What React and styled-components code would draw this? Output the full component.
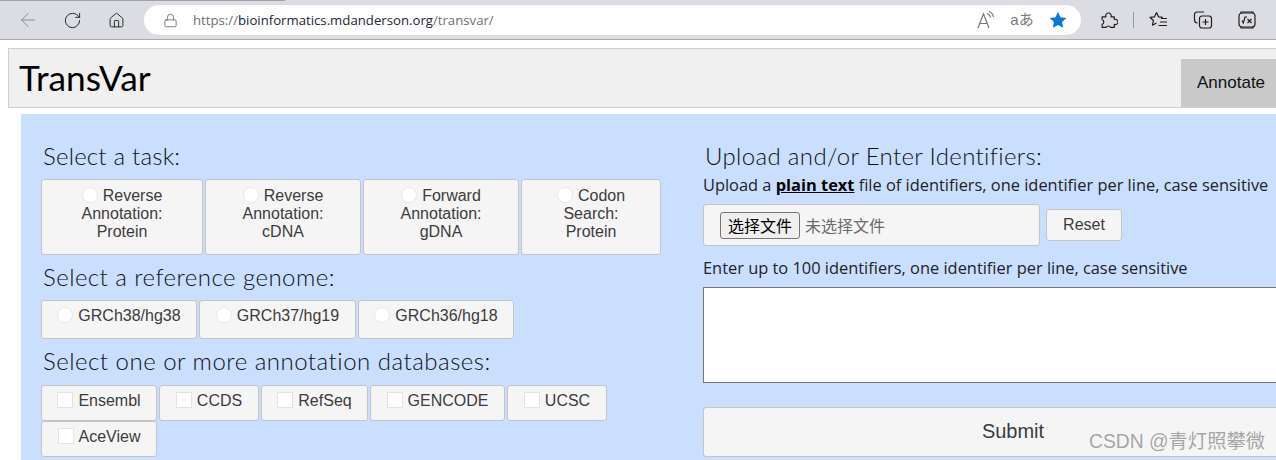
import React from 'react';
import styled, { createGlobalStyle } from 'styled-components';
import { ArrowLeft, RotateCw, Home, Lock } from 'lucide-react';

const GlobalStyle = createGlobalStyle`
  html, body {
    margin: 0;
    padding: 0;
    width: 1276px;
    height: 460px;
    overflow: hidden;
    background: #fff;
    font-family: "Liberation Sans", Arial, sans-serif;
  }
`;

const Toolbar = styled.div`
  position: relative;
  height: 40px;
  box-sizing: border-box;
  background: #dcdde2;
  border-bottom: 1px solid #a9aaad;
  display: flex;
  align-items: center;
  padding-top: 1px;
`;

const TabEdge = styled.div`
  position: absolute;
  top: 0;
  left: 0;
  width: 285px;
  height: 1px;
  background: #a0a2a8;
`;

const NavIcon = styled.div`
  width: ${({ w }) => w || 44}px;
  display: flex;
  justify-content: center;
  align-items: center;
  color: ${({ muted }) => (muted ? '#85868a' : '#1f1f1f')};
`;

const AddressBar = styled.div`
  flex: none;
  width: 937px;
  height: 30px;
  margin-left: 12px;
  border-radius: 15px;
  background: #fff;
  display: flex;
  align-items: center;
  padding: 0 0 0 19px;
  box-sizing: border-box;
`;

const Url = styled.div`
  margin-left: 15px;
  font: 13.2px "Open Sans", "Noto Sans", sans-serif;
  color: #6f7073;
  flex: 1;
  span { color: #1b2733; }
`;

const AddressIcon = styled.div`
  width: ${({ w }) => w}px;
  padding-bottom: ${({ lift }) => lift || 0}px;
  display: flex;
  justify-content: center;
  align-items: center;
  color: #77787b;
  font: 15px "Liberation Sans", "Noto Sans CJK JP", sans-serif;
`;

const Actions = styled.div`
  display: flex;
  align-items: center;
  margin-left: 14px;
`;

const Divider = styled.div`
  width: 1px;
  height: 16px;
  background: #9a9a9e;
  margin: 0 14px 0 10px;
`;

const ActionIcon = styled.div`
  width: ${({ w }) => w || 44}px;
  margin-left: ${({ before }) => before || 0}px;
  display: flex;
  justify-content: center;
  color: #1f1f1f;
`;

const Page = styled.div`
  padding: 8px 0 0 8px;
`;

const Navbar = styled.div`
  height: 60px;
  box-sizing: border-box;
  background: #f0f0f0;
  border: 1px solid #cfcfcf;
  border-right: none;
  display: flex;
  justify-content: space-between;
  align-items: flex-end;
`;

const Brand = styled.div`
  align-self: center;
  margin-left: 10px;
  font: 35.3px/44px "Lato", "Open Sans", sans-serif;
  color: #000;
`;

const NavTab = styled.div`
  width: 95px;
  height: 48px;
  box-sizing: border-box;
  background: #c9c9c9;
  padding-left: 16px;
  font-size: 17px;
  line-height: 47px;
  color: #111;
`;

const Panel = styled.div`
  margin: 6px 0 0 13px;
  height: 346px;
  background: #cadfff;
  display: flex;
  padding: 25px 0 0 20px;
  box-sizing: border-box;
  overflow: hidden;
`;

const LeftColumn = styled.div`
  flex: none;
  width: 662px;
`;

const RightColumn = styled.div`
  flex: none;
  width: 620px;
`;

const Heading = styled.h2`
  margin: 0 0 ${({ gap }) => gap}px 2px;
  font: 300 24px/34px "Lato", "Noto Sans", sans-serif;
  letter-spacing: ${({ spacing }) => spacing || 0}px;
  color: #111;
`;

const ButtonRow = styled.div`
  display: flex;
  flex-wrap: wrap;
  column-gap: 2px;
  margin-bottom: ${({ after }) => after || 0}px;
`;

const ChoiceButton = styled.label`
  width: ${({ w }) => w}px;
  height: ${({ h }) => h}px;
  box-sizing: border-box;
  padding-top: ${({ top }) => top || 6}px;
  background: #f5f5f5;
  border: 1px solid #c4c4c4;
  border-radius: 3px;
  font-size: 16px;
  line-height: 18px;
  text-align: center;
  color: #3c3c3c;
`;

const Radio = styled.input.attrs({ type: 'radio' })`
  appearance: none;
  display: inline-block;
  box-sizing: border-box;
  width: 16px;
  height: 16px;
  margin: 0 5px 0 0;
  border: 1px solid #e6e9ee;
  border-radius: 50%;
  background: #fff;
  vertical-align: -2px;
`;

const Checkbox = styled.input.attrs({ type: 'checkbox' })`
  appearance: none;
  display: inline-block;
  box-sizing: border-box;
  width: 16px;
  height: 16px;
  margin: 0 5px 0 0;
  border: 1px solid #e2e4e8;
  background: #fff;
  vertical-align: -2px;
`;

const Note = styled.p`
  margin: 0;
  font: 16.4px/20px "Open Sans", "Noto Sans", sans-serif;
  color: #222;
  white-space: nowrap;
  b {
    color: #000;
    text-decoration: underline;
  }
`;

const FileRow = styled.div`
  display: flex;
  align-items: center;
  gap: 6px;
  margin: 9px 0 12px;
`;

const FileBox = styled.div`
  width: 337px;
  height: 42px;
  box-sizing: border-box;
  background: #f5f5f5;
  border: 1px solid #c4c4c4;
  border-radius: 3px;
  display: flex;
  align-items: center;
  padding-left: 16px;
  gap: 5px;
  font: 16px "Noto Sans CJK SC", sans-serif;
  color: #6b6b6b;
`;

const FileButton = styled.button`
  width: 80px;
  height: 27px;
  padding: 0;
  background: #efefef;
  border: 1px solid #767676;
  border-radius: 3px;
  font: 16px "Noto Sans CJK SC", sans-serif;
  color: #000;
`;

const ResetButton = styled.button`
  width: 76px;
  height: 32px;
  padding: 0;
  background: #f5f5f5;
  border: 1px solid #c4c4c4;
  border-radius: 3px;
  font: 16px "Liberation Sans", sans-serif;
  color: #3c3c3c;
`;

const IdentifierInput = styled.textarea`
  display: block;
  width: 620px;
  height: 96px;
  box-sizing: border-box;
  margin: 9px 0 24px;
  background: #fff;
  border: 1px solid #767676;
  resize: none;
`;

const SubmitButton = styled.button`
  display: block;
  width: 620px;
  height: 50px;
  padding: 0 0 2px;
  background: #f5f5f5;
  border: 1px solid #c4c4c4;
  border-radius: 3px;
  font: 20px "Liberation Sans", sans-serif;
  color: #3c3c3c;
`;

const Watermark = styled.div`
  position: absolute;
  left: 1089px;
  top: 430px;
  font: 19.3px/24px "Liberation Sans", "Noto Sans CJK SC", sans-serif;
  color: rgba(130, 130, 130, 0.7);
  white-space: nowrap;
`;

const ReadAloudIcon = () => (
  <svg width="20" height="20" viewBox="0 0 20 20" fill="none" stroke="currentColor" strokeWidth="1.2">
    <path d="M2 18 L7.5 4 L13 18 M4 13.5 H11" />
    <path d="M11 3.5 a5 5 0 0 1 3.5 4 M13 1.5 a7.5 7.5 0 0 1 4.5 5.5" />
  </svg>
);

const StarIcon = () => (
  <svg width="18" height="18" viewBox="0 0 18 18">
    <path
      d="M9 .8 l2.5 5.4 5.9.7 -4.4 4 1.2 5.9 L9 13.9 l-5.2 2.9 1.2-5.9 -4.4-4 5.9-.7 z"
      fill="#0a78d7"
    />
  </svg>
);

const PuzzleIcon = () => (
  <svg width="18" height="18" viewBox="0 0 17 17" fill="none" stroke="currentColor" strokeWidth="1.1" strokeLinejoin="round">
    <path d="M2 5.5 H5.6 a2.6 2.6 0 1 1 4.8 0 H13.5 V8 a2.5 2.5 0 1 1 0 4.6 V15.5 H10 a2.3 2.3 0 0 0 -4.2 0 H2 V12.6 a2.3 2.3 0 0 0 0 -4.4 Z" />
  </svg>
);

const FavoritesIcon = () => (
  <svg width="20" height="20" viewBox="0 0 20 20" fill="none" stroke="currentColor" strokeWidth="1.2">
    <path d="M7.5 2.5 l2 4.3 4.3.5 M7.5 2.5 l-2 4.3 -4.5.5 3.4 3.2 -.9 4.7 4-2.3" strokeLinejoin="round" />
    <path d="M12 8.5 H18 M11 12 H18 M9.5 15.5 H18" />
  </svg>
);

const CollectionsIcon = () => (
  <svg width="20" height="20" viewBox="0 0 20 20" fill="none" stroke="currentColor" strokeWidth="1.2">
    <path d="M11 2 H4 a2.5 2.5 0 0 0 -2.5 2.5 V10 a3 3 0 0 0 3 3" />
    <rect x="6.5" y="6" width="12" height="12" rx="2.5" />
    <path d="M12.5 9 V15 M9.5 12 H15.5" />
  </svg>
);

const MathIcon = () => (
  <svg width="20" height="20" viewBox="0 0 20 20" fill="none" stroke="currentColor" strokeWidth="1.2">
    <rect x="2" y="3" width="16" height="14" rx="3" />
    <path d="M4 3.5 V2 H16 V3.5 M4 16.5 V18 H16 V16.5" />
    <path d="M5 10.5 L6.3 13 L8 7 H10" />
    <path d="M10.5 9 L14.5 13 M14.5 9 L10.5 13" />
  </svg>
);

const tasks = [
  { w: 162, lines: ['Reverse', 'Annotation:', 'Protein'] },
  { w: 156, lines: ['Reverse', 'Annotation:', 'cDNA'] },
  { w: 156, lines: ['Forward', 'Annotation:', 'gDNA'] },
  { w: 140, lines: ['Codon', 'Search:', 'Protein'] },
];

const genomes = [
  { w: 156, name: 'GRCh38/hg38' },
  { w: 157, name: 'GRCh37/hg19' },
  { w: 156, name: 'GRCh36/hg18' },
];

const databases = [
  { w: 116, name: 'Ensembl' },
  { w: 100, name: 'CCDS' },
  { w: 107, name: 'RefSeq' },
  { w: 135, name: 'GENCODE' },
  { w: 100, name: 'UCSC' },
  { w: 116, name: 'AceView' },
];

const App = () => (
  <>
    <GlobalStyle />
    <Toolbar>
      <TabEdge />
      <NavIcon muted><ArrowLeft size={22} strokeWidth={1} style={{ marginLeft: 12 }} /></NavIcon>
      <NavIcon><RotateCw size={19} strokeWidth={1.2} style={{ marginLeft: 12 }} /></NavIcon>
      <NavIcon><Home size={17} strokeWidth={1.3} style={{ marginLeft: 12 }} /></NavIcon>
      <AddressBar>
        <Lock size={15} strokeWidth={1.2} color="#555" />
        <Url>https://<span>bioinformatics.mdanderson.org</span>/transvar/</Url>
        <AddressIcon w={36}><ReadAloudIcon /></AddressIcon>
        <AddressIcon w={36} lift={3}>aあ</AddressIcon>
        <AddressIcon w={36}><StarIcon /></AddressIcon>
        <AddressIcon w={5} />
      </AddressBar>
      <Actions>
        <ActionIcon w={28}><PuzzleIcon /></ActionIcon>
        <Divider />
        <ActionIcon w={22}><FavoritesIcon /></ActionIcon>
        <ActionIcon w={44} before={11}><CollectionsIcon /></ActionIcon>
        <ActionIcon w={43}><MathIcon /></ActionIcon>
      </Actions>
    </Toolbar>
    <Page>
      <Navbar>
        <Brand>TransVar</Brand>
        <NavTab>Annotate</NavTab>
      </Navbar>
      <Panel>
        <LeftColumn>
          <Heading gap={6} spacing={0.2}>Select a task:</Heading>
          <ButtonRow after={5}>
            {tasks.map(({ w, lines }) => (
              <ChoiceButton key={lines.join()} w={w} h={76} top={7}>
                <Radio name="task" />{lines[0]}<br />{lines[1]}<br />{lines[2]}
              </ChoiceButton>
            ))}
          </ButtonRow>
          <Heading gap={6} spacing={0.45}>Select a reference genome:</Heading>
          <ButtonRow after={5}>
            {genomes.map(({ w, name }) => (
              <ChoiceButton key={name} w={w} h={39}>
                <Radio name="genome" />{name}
              </ChoiceButton>
            ))}
          </ButtonRow>
          <Heading gap={7} spacing={0.5}>Select one or more annotation databases:</Heading>
          <ButtonRow>
            {databases.map(({ w, name }) => (
              <ChoiceButton key={name} w={w} h={36}>
                <Checkbox />{name}
              </ChoiceButton>
            ))}
          </ButtonRow>
        </LeftColumn>
        <RightColumn>
          <Heading gap={2} spacing={0.35}>Upload and/or Enter Identifiers:</Heading>
          <Note>Upload a <b>plain text</b> file of identifiers, one identifier per line, case sensitive</Note>
          <FileRow>
            <FileBox>
              <FileButton>选择文件</FileButton>
              未选择文件
            </FileBox>
            <ResetButton>Reset</ResetButton>
          </FileRow>
          <Note>Enter up to 100 identifiers, one identifier per line, case sensitive</Note>
          <IdentifierInput />
          <SubmitButton>Submit</SubmitButton>
        </RightColumn>
      </Panel>
    </Page>
    <Watermark>CSDN @青灯照攀微</Watermark>
  </>
);

export default App;
